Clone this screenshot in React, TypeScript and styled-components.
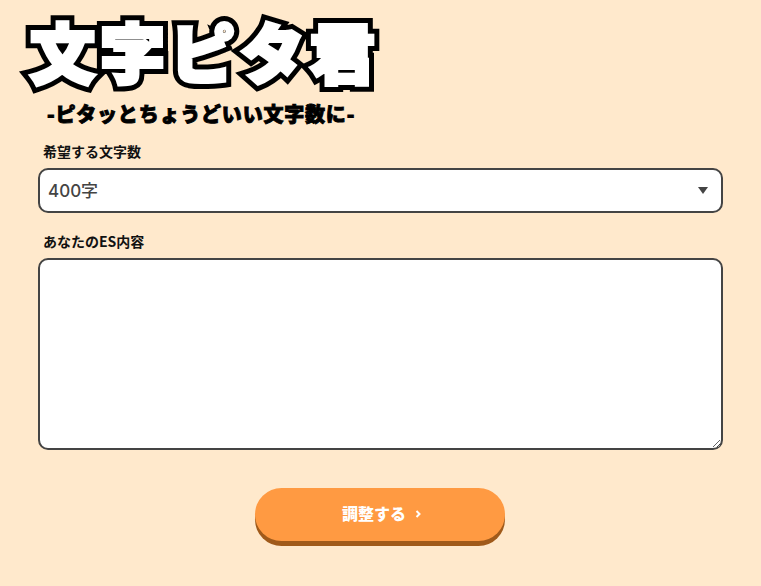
import styled, { createGlobalStyle } from 'styled-components';

const GlobalStyle = createGlobalStyle`
  html, body {
    margin: 0;
    padding: 0;
    background: #ffe9cc;
    font-family: 'Inter', 'Noto Sans CJK JP', sans-serif;
  }
  * { box-sizing: border-box; }
`;

const Page = styled.main`
  width: 761px;
  height: 586px;
  overflow: hidden;
  padding: 12px 38px 0;
`;

const Header = styled.header`
  display: flex;
  flex-direction: column;
  margin-bottom: 13px;
`;

const Logo = styled.h1`
  position: relative;
  margin: 0 0 0 -8px;
  height: 80px;
  font-family: 'Noto Sans CJK JP', sans-serif;
  font-size: 65px;
  font-weight: 900;
  line-height: 76px;
  letter-spacing: 5px;
  color: #000;
  -webkit-text-stroke: 14px #000;
  white-space: nowrap;

  /* white face sits over the black outline */
  &::after {
    content: attr(data-text);
    position: absolute;
    top: 0;
    left: 0;
    color: #fff;
    -webkit-text-stroke: 4px #fff;
  }
`;

const Slogan = styled.p`
  margin: 7px 0 0 9px;
  font-family: 'Noto Sans CJK JP', sans-serif;
  font-size: 20px;
  font-weight: 900;
  line-height: 30px;
  letter-spacing: 0.8px;
  color: #000;
  -webkit-text-stroke: 0.9px #000;
  white-space: nowrap;
`;

const Field = styled.div`
  margin-bottom: 19px;
`;

const Label = styled.label`
  display: block;
  margin: 0 0 8px 5px;
  font-family: 'Noto Sans CJK JP', sans-serif;
  font-size: 14px;
  font-weight: 700;
  line-height: 18px;
  color: #111;
`;

const SelectWrap = styled.div`
  position: relative;

  &::after {
    content: '';
    position: absolute;
    top: 19px;
    right: 15px;
    border-left: 5px solid transparent;
    border-right: 5px solid transparent;
    border-top: 7px solid #444;
    pointer-events: none;
  }
`;

const Select = styled.select`
  display: block;
  width: 100%;
  height: 45px;
  padding: 0 8px;
  appearance: none;
  background: #fff;
  border: 2px solid #444;
  border-radius: 10px;
  font-family: 'Inter', 'Noto Sans CJK JP', sans-serif;
  font-size: 17px;
  font-weight: 500;
  color: #444;
`;

const TextArea = styled.textarea`
  display: block;
  width: 100%;
  height: 192px;
  padding: 8px;
  background: #fff;
  border: 2px solid #444;
  border-radius: 10px;
  font-family: 'Inter', 'Noto Sans CJK JP', sans-serif;
  font-size: 16px;
  color: #444;
`;

const Actions = styled.div`
  display: flex;
  justify-content: center;
  margin-top: 38px;
`;

const Button = styled.button`
  display: flex;
  align-items: center;
  justify-content: center;
  gap: 8px;
  width: 250px;
  height: 53px;
  margin-left: -1px;
  padding: 0 0 4px 4px;
  background: #ff9a42;
  border: none;
  border-radius: 27px;
  box-shadow: 0 5px 0 #a05a1a;
  font-family: 'Noto Sans CJK JP', sans-serif;
  font-size: 16px;
  font-weight: 900;
  color: #fff;
`;

const Chevron = styled.svg`
  width: 8px;
  height: 10px;
  margin-top: 2px;
`;

export default function App() {
  return (
    <>
      <GlobalStyle />
      <Page>
        <Header>
          <Logo data-text="文字ピタ君">文字ピタ君</Logo>
          <Slogan>-ピタッとちょうどいい文字数に-</Slogan>
        </Header>
        <Field>
          <Label htmlFor="count">希望する文字数</Label>
          <SelectWrap>
            <Select id="count" defaultValue="400">
              <option value="400">400字</option>
            </Select>
          </SelectWrap>
        </Field>
        <Field>
          <Label htmlFor="content">あなたのES内容</Label>
          <TextArea id="content" />
        </Field>
        <Actions>
          <Button type="button">
            調整する
            <Chevron viewBox="0 0 8 10" fill="none" stroke="#fff" strokeWidth="2">
              <path d="M2.5 2l3 3-3 3" />
            </Chevron>
          </Button>
        </Actions>
      </Page>
    </>
  );
}
